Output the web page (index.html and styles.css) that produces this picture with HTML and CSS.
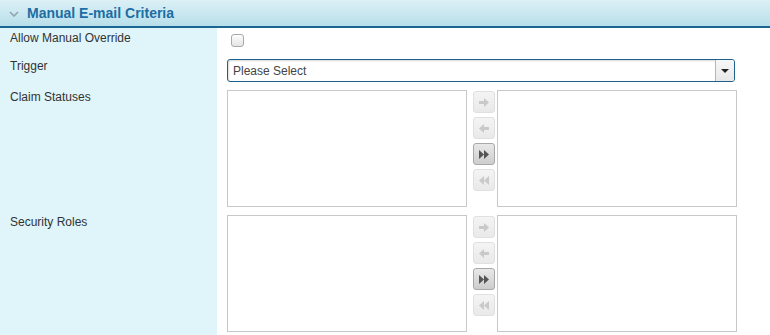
FILE: index.html
```html
<!DOCTYPE html>
<html lang="en">
<head>
    <meta charset="UTF-8">
    <title>Manual E-mail Criteria</title>
    <link rel="stylesheet" href="styles.css">
</head>
<body>
    <div class="panel">
        <div class="panel-header">
            <svg class="chevron" width="10" height="6" viewBox="0 0 10 6">
                <path d="M1 1 L5 5 L9 1" fill="none" stroke="#8fa4ad" stroke-width="1.6"/>
            </svg>
            <span class="panel-title">Manual E-mail Criteria</span>
        </div>
        <div class="form">
            <div class="row row-first">
                <div class="label">Allow Manual Override</div>
                <div class="field"><span class="checkbox"></span></div>
            </div>
            <div class="row">
                <div class="label">Trigger</div>
                <div class="field">
                    <div class="select">
                        <span class="select-text">Please Select</span>
                        <span class="select-arrow"></span>
                    </div>
                </div>
            </div>
            <div class="row">
                <div class="label">Claim Statuses</div>
                <div class="field picker">
                    <div class="listbox"></div>
                    <div class="moves">
                        <button class="move"><svg width="10" height="9" viewBox="0 0 10 9"><path d="M0 3h5V0l5 4.5-5 4.5V6H0z" fill="#c9c9c9"/></svg></button>
                        <button class="move"><svg width="10" height="9" viewBox="0 0 10 9"><path d="M10 3H5V0L0 4.5l5 4.5V6h5z" fill="#c9c9c9"/></svg></button>
                        <button class="move active"><svg width="10" height="9" viewBox="0 0 10 9"><path d="M0 0l5 4.5-5 4.5zM5 0l5 4.5-5 4.5z" fill="#555"/></svg></button>
                        <button class="move"><svg width="10" height="9" viewBox="0 0 10 9"><path d="M10 0L5 4.5l5 4.5zM5 0L0 4.5l5 4.5z" fill="#c9c9c9"/></svg></button>
                    </div>
                    <div class="listbox"></div>
                </div>
            </div>
            <div class="row">
                <div class="label">Security Roles</div>
                <div class="field picker">
                    <div class="listbox"></div>
                    <div class="moves">
                        <button class="move"><svg width="10" height="9" viewBox="0 0 10 9"><path d="M0 3h5V0l5 4.5-5 4.5V6H0z" fill="#c9c9c9"/></svg></button>
                        <button class="move"><svg width="10" height="9" viewBox="0 0 10 9"><path d="M10 3H5V0L0 4.5l5 4.5V6h5z" fill="#c9c9c9"/></svg></button>
                        <button class="move active"><svg width="10" height="9" viewBox="0 0 10 9"><path d="M0 0l5 4.5-5 4.5zM5 0l5 4.5-5 4.5z" fill="#555"/></svg></button>
                        <button class="move"><svg width="10" height="9" viewBox="0 0 10 9"><path d="M10 0L5 4.5l5 4.5zM5 0L0 4.5l5 4.5z" fill="#c9c9c9"/></svg></button>
                    </div>
                    <div class="listbox"></div>
                </div>
            </div>
        </div>
    </div>
</body>
</html>
```

FILE: styles.css
```css
body {
    margin: 0;
    padding: 0;
    font-family: "Liberation Sans", Arial, sans-serif;
    font-size: 12px;
    color: #333;
    background-color: #fff;
}

.panel {
    width: 770px;
    height: 335px;
    overflow: hidden;
}

.panel-header {
    height: 26px;
    display: flex;
    align-items: center;
    background: linear-gradient(to bottom, #dcf0f6, #b8dfea);
    border-bottom: 2px solid #1b6593;
}

.chevron {
    margin-left: 9px;
    margin-right: 8px;
    margin-top: 1px;
}

.panel-title {
    font-size: 14px;
    font-weight: bold;
    color: #1c6ea4;
}

.form {
    background: linear-gradient(to right, #dff5fa 217px, #fff 217px);
    height: 307px;
}

.row {
    display: flex;
    padding: 4px 0;
}

.row-first {
    min-height: 19px;
    padding-top: 3px;
    padding-bottom: 5px;
}

.label {
    width: 207px;
    padding-left: 10px;
    line-height: 14px;
}

.field {
    padding-left: 10px;
}

.checkbox {
    display: block;
    width: 11px;
    height: 11px;
    margin: 3px 0 0 4px;
    border: 1px solid #a9a9a9;
    border-radius: 3px;
    background: linear-gradient(to bottom, #fdfdfd, #e4e4e4);
}

.select {
    width: 506px;
    height: 21px;
    border: 1px solid #1f5f8b;
    border-radius: 3px;
    display: flex;
    align-items: center;
    box-shadow: inset 1px 1px 2px rgba(0, 0, 0, 0.15);
    background-color: #fff;
}

.select-text {
    flex-grow: 1;
    padding-left: 5px;
    color: #444;
}

.select-arrow {
    width: 18px;
    height: 21px;
    border-left: 1px solid #b5b5b5;
    background: linear-gradient(to bottom, #f7f7f7, #e8e8e8);
    border-radius: 0 2px 2px 0;
    position: relative;
}

.select-arrow::after {
    content: "";
    position: absolute;
    left: 5px;
    top: 9px;
    border-left: 4px solid transparent;
    border-right: 4px solid transparent;
    border-top: 4px solid #222;
}

.picker {
    display: flex;
}

.listbox {
    width: 238px;
    height: 115px;
    border: 1px solid #c8c8c8;
    background-color: #fff;
}

.moves {
    display: flex;
    flex-direction: column;
    gap: 4px;
    margin: 1px 2px 0 6px;
}

.move {
    width: 22px;
    height: 22px;
    padding: 0;
    border: 1px solid #e0e0e0;
    border-radius: 3px;
    background: linear-gradient(to bottom, #f4f4f4, #e9e9e9);
    display: flex;
    align-items: center;
    justify-content: center;
}

.move.active {
    border-color: #a8a8a8;
    background: linear-gradient(to bottom, #e8e8e8, #cdcdcd);
}
```
